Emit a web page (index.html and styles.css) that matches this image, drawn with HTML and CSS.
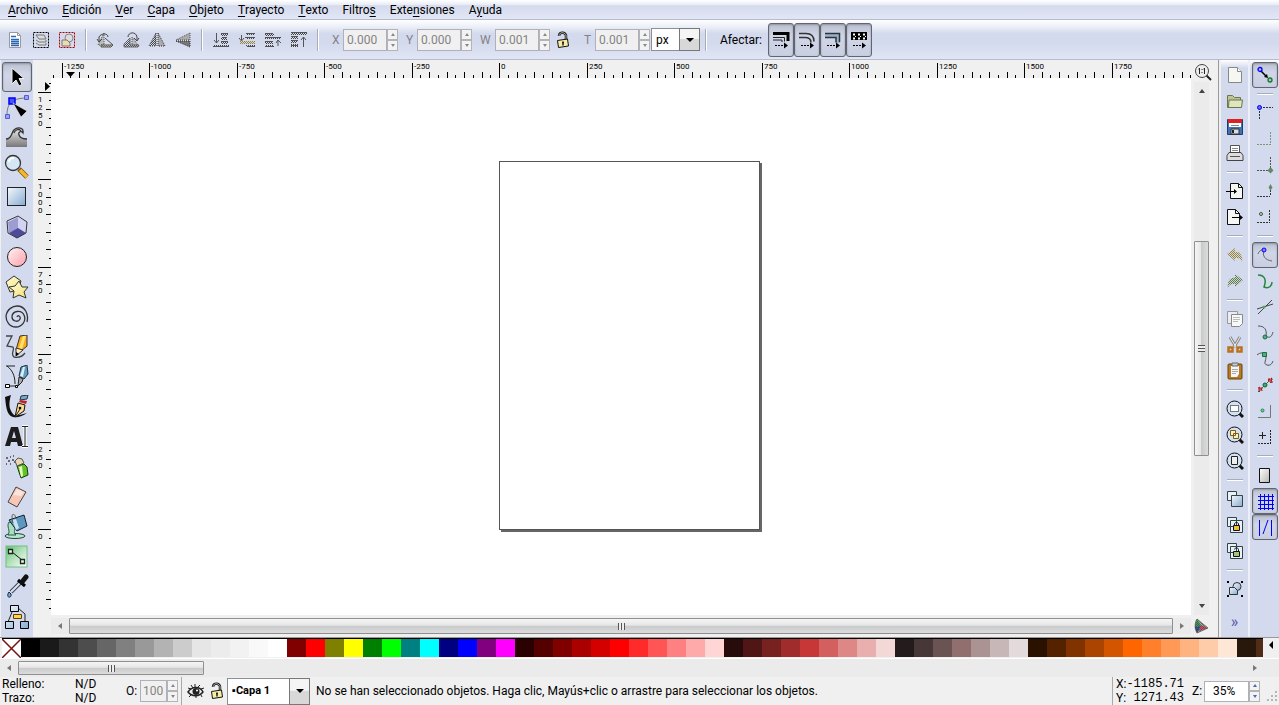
FILE: index.html
```html
<!DOCTYPE html>
<html lang="es">
<head>
<meta charset="utf-8">
<title>Inkscape</title>
<link rel="stylesheet" href="styles.css">
</head>
<body>
<svg class="defs" aria-hidden="true">
  <defs>
    <pattern id="dither" width="2" height="2" patternUnits="userSpaceOnUse"><path d="M0 0h1v1H0zM1 1h1v1H1z" fill="#444"/></pattern>
    <pattern id="ditherTan" width="2" height="2" patternUnits="userSpaceOnUse"><rect width="2" height="2" fill="#ded9c0"/><path d="M0 0h1v1H0zM1 1h1v1H1z" fill="#8c8458"/></pattern>
    <pattern id="ditherGreen" width="2" height="2" patternUnits="userSpaceOnUse"><rect width="2" height="2" fill="#cdd8cc"/><path d="M0 0h1v1H0zM1 1h1v1H1z" fill="#5f7a58"/></pattern>
    <linearGradient id="blue" x2="1" y2="1"><stop stop-color="#f4f9fd"/><stop offset="1" stop-color="#86acd0"/></linearGradient>
    <linearGradient id="pink" x2="1" y2="1"><stop stop-color="#fff4f4"/><stop offset="1" stop-color="#ff9faa"/></linearGradient>
    <linearGradient id="grey" x2="1" y2="1"><stop stop-color="#fff"/><stop offset="1" stop-color="#b5b5b5"/></linearGradient>
    <linearGradient id="gold" x2="1" y2="1"><stop stop-color="#ffffdf"/><stop offset="1" stop-color="#f5de72"/></linearGradient>
    <linearGradient id="green" x2="1" y2="1"><stop stop-color="#5fbf70"/><stop offset=".5" stop-color="#b5e2bd"/><stop offset="1" stop-color="#fff"/></linearGradient>
    <linearGradient id="wave" x2="0" y2="1"><stop stop-color="#eee"/><stop offset="1" stop-color="#777"/></linearGradient>
    <symbol id="lock" viewBox="0 0 14 18"><path d="M3 5c0-5 8-4 7 1v3" fill="none" stroke="#111" stroke-width="2.500"/><path d="M3 5c0-5 8-4 7 1v3" fill="none" stroke="#ddd" stroke-width=".8"/><path d="M1.500 9.500l10-1.500 1 7-10 1.500z" fill="#f7eea5" stroke="#111"/><path d="M7 10.500v4M6 11.500h2" stroke="#222" stroke-width="1.500"/></symbol>
    <symbol id="lens" viewBox="0 0 18 18"><path d="M13 13l4 4" stroke="#111" stroke-width="3"/><circle cx="8.500" cy="8.500" r="7.500" fill="#cfe3f4" stroke="#111"/></symbol>
  </defs>
</svg>

<nav class="menubar" aria-label="Menú">
  <button><u>A</u>rchivo</button><button><u>E</u>dición</button><button><u>V</u>er</button><button><u>C</u>apa</button><button><u>O</u>bjeto</button><button><u>T</u>rayecto</button><button><u>T</u>exto</button><button>Filtro<u>s</u></button><button>Exte<u>n</u>siones</button><button>A<u>y</u>uda</button>
</nav>

<div class="toolbar">
  <button class="tb" aria-label="Seleccionar todo"><svg width="16" height="18"><path d="M2.500 1.500h8l3 3v12h-11z" fill="#fff" stroke="#999"/><path d="M10.500 1.500v3h3" fill="none" stroke="#999"/><path d="M4 5.500h5M4 8.500h8M4 10.500h8M4 12.500h8M4 14.500h8" stroke="#2a66b5" stroke-width="1.300"/></svg></button>
  <button class="tb" aria-label="Seleccionar en todas las capas"><svg width="18" height="18"><rect x="1.500" y="1.500" width="15" height="15" fill="none" stroke="#000" stroke-dasharray="2 1"/><path d="M4 12l3 2h7v-2M4 9l3 2h7V9M4 4h8l2 4H7z" fill="#ddd" stroke="#777"/></svg></button>
  <button class="tb" aria-label="Deseleccionar"><svg width="18" height="18"><rect x="1.500" y="1.500" width="15" height="15" fill="none" stroke="#a00" stroke-dasharray="2 1"/><circle cx="11" cy="7" r="4" fill="#ddd" stroke="#888"/><path d="M4 9h5l3 3v3H4z" fill="#eedcae" stroke="#777"/></svg></button>
  <i class="vsep"></i>
  <button class="tb" aria-label="Rotar a la izquierda"><svg width="18" height="18"><path d="M8 2v12H2z" fill="#bbb" stroke="#555" stroke-dasharray="1 1"/><path d="M9 7l8 7H5v2h10l2-2" fill="url(#ditherTan)" stroke="#555"/><path d="M12 6c0-4-7-4-9 0v4M1 8l2 3 3-3" fill="none" stroke="#444"/></svg></button>
  <button class="tb" aria-label="Rotar a la derecha"><svg width="18" height="18"><path d="M10 6v8h6z" fill="#bbb" stroke="#555" stroke-dasharray="1 1"/><path d="M8 7l-6 6v3h14l1-2H8z" fill="url(#dither)" stroke="#666"/><path d="M6 6c0-5 8-6 9 0v3M12 7l3 3 2-3" fill="none" stroke="#444"/></svg></button>
  <button class="tb" aria-label="Reflejar horizontal"><svg width="18" height="18"><path d="M8 2v13H1z" fill="url(#dither)"/><path d="M10 2v13h7z" fill="#aaa" stroke="#333" stroke-dasharray="1 1"/><path d="M8 2v13H1z" fill="none" stroke="#444" stroke-dasharray="1 1"/></svg></button>
  <button class="tb" aria-label="Reflejar vertical"><svg width="18" height="18"><path d="M16 2v7H2z" fill="#aaa" stroke="#555" stroke-dasharray="1 1"/><path d="M2 10h14v6z" fill="#777" stroke="#333" stroke-dasharray="1 1"/></svg></button>
  <i class="vsep"></i>
  <button class="tb" aria-label="Bajar al fondo"><svg width="18" height="18"><path d="M9 2h7v3H9zM9 6h6v3H9zM9 10h7v3H9zM2 14h15v2H2z" fill="url(#dither)"/><path d="M4.500 2v10M2 9l2.500 3L7 9M9 2.500h7M10 6.500h5M9 10.500h7M1 15.500h16" fill="none" stroke="#555"/></svg></button>
  <button class="tb" aria-label="Bajar"><svg width="18" height="18"><path d="M8 2h9v2H8zM8 6h9v2H8zM8 14h9v2H8z" fill="url(#dither)"/><path d="M2 10h15v3H2z" fill="url(#ditherTan)"/><path d="M3.500 4v5M1 7l2.500 3L6 7M8 2.500h9M7 6.500h10M9 15.500h8" fill="none" stroke="#555"/></svg></button>
  <button class="tb" aria-label="Subir"><svg width="18" height="18"><path d="M1 2h9v3H1zM1 6h16v2H1zM1 10h8v3H1zM1 14h9v2H1z" fill="url(#dither)"/><path d="M1 2.500h8M1 6.500h15M1 10.500h8M1 15.500h8M14 15v-6M12 12l2-3 3 3" fill="none" stroke="#555"/></svg></button>
  <button class="tb" aria-label="Subir al frente"><svg width="18" height="18"><path d="M1 1h16v3H1zM1 5h7v3H1zM1 9h6v3H1zM1 13h7v3H1z" fill="url(#dither)"/><path d="M1 1.500h16M1 5.500h7M2 9.500h6M1 14.500h7M13.500 16V6M11 9l2.500-3L16 9" fill="none" stroke="#555"/></svg></button>
  <i class="vsep"></i>
  <div class="field"><label for="fx">X</label><span class="spin"><input id="fx" value="0.000" disabled><span class="steps"><button aria-label="Más" disabled></button><button aria-label="Menos" disabled></button></span></span></div>
  <div class="field"><label for="fy">Y</label><span class="spin"><input id="fy" value="0.000" disabled><span class="steps"><button aria-label="Más" disabled></button><button aria-label="Menos" disabled></button></span></span></div>
  <div class="field wide"><label for="fw">W</label><span class="spin"><input id="fw" value="0.001" disabled><span class="steps"><button aria-label="Más" disabled></button><button aria-label="Menos" disabled></button></span></span></div>
  <button class="tb" aria-label="Bloquear proporción"><svg width="14" height="18"><use href="#lock"/></svg></button>
  <div class="field"><label for="fh">T</label><span class="spin"><input id="fh" value="0.001" disabled><span class="steps"><button aria-label="Más" disabled></button><button aria-label="Menos" disabled></button></span></span></div>
  <span class="combo units"><select aria-label="Unidad"><option>px</option></select></span>
  <i class="vsep"></i>
  <span class="affect">Afectar:</span>
  <button class="toggle" aria-label="Escalar trazo"><svg width="18" height="18"><path d="M1 2.500h15V10" fill="none" stroke="#000" stroke-width="3"/><path d="M1 6.500h11.500v4M1 9h9v2" fill="none" stroke="#222"/><path d="M3 14.500h9" stroke="#000" stroke-dasharray="2 1"/><path d="M12 11.500l4 3-4 3z"/></svg></button>
  <button class="toggle" aria-label="Escalar esquinas"><svg width="18" height="18"><path d="M1 2.500h7c5 0 8 3 8 8M1 6.500h6c4 0 6 2 6 5" fill="none" stroke="#333" stroke-width="1.500"/><path d="M3 14.500h9" stroke="#000" stroke-dasharray="2 1"/><path d="M12 11.500l4 3-4 3z"/></svg></button>
  <button class="toggle" aria-label="Mover degradados"><svg width="18" height="18"><path d="M1 2h15v10h-4V6H1z" fill="#8fb4d8"/><path d="M1 2.500h14.500V11M1 6.500h11v5" fill="none" stroke="#333" stroke-width="1.500"/><path d="M3 14.500h9" stroke="#000" stroke-dasharray="2 1"/><path d="M12 11.500l4 3-4 3z"/></svg></button>
  <button class="toggle" aria-label="Mover patrones"><svg width="18" height="18"><rect x="1" y="1" width="16" height="8"/><path d="M3 3.500h13M3 7.500h13" stroke="#fff" stroke-width="2" stroke-dasharray="2 3"/><path d="M5 5.500h11" stroke="#fff" stroke-dasharray="1 4"/><path d="M3 14.500h9" stroke="#000" stroke-dasharray="2 1"/><path d="M12 11.500l4 3-4 3z"/></svg></button>
</div>

<main class="work">
  <div class="toolbox">
    <button class="on" aria-label="Seleccionar"><svg width="24" height="24"><path d="M7 3v16l4-4 3 6 3-1.500-3-6h5z" fill="#000" stroke="#eee"/></svg></button>
    <button aria-label="Nodos"><svg width="26" height="26"><path d="M3 22C3 12 5 4 23 4" fill="none" stroke="#777"/><path d="M1.500 20.500h4v4h-4zM20.500 1.500h4v4h-4z" fill="#9aa0f0" stroke="#5558dd"/><path d="M5 4h6v6H5z" fill="#4a55f0" stroke="#00f" stroke-width="1.500"/><path d="M9 9l14 8-6 6z" stroke="#eee" stroke-width=".6"/></svg></button>
    <button aria-label="Retocar"><svg width="24" height="24"><path d="M1 14c6 0 5-6 8-9 4-4 10-2 9 2-3-2-5 0-4 3 1 3 4 4 8 4v8H1z" fill="url(#wave)"/><path d="M1 14c6 0 5-6 8-9 4-4 10-2 9 3-2-3-5-1-4 2 1 3 4 4 8 4M9 8c1-3 5-5 7-2" fill="none" stroke="#333" stroke-width="1.300"/></svg></button>
    <button aria-label="Zoom"><svg width="26" height="26"><path d="M15 15l8 8" stroke="#7b5410" stroke-width="5"/><path d="M16 16l7 7" stroke="#f7b62c" stroke-width="3.500"/><circle cx="9" cy="9" r="7.500" fill="#d5e7f5" stroke="#333" stroke-width="1.300"/><path d="M5 8c0-2 2-4 5-4" fill="none" stroke="#fff" stroke-width="2"/></svg></button>
    <button aria-label="Rectángulo"><svg width="22" height="22"><rect x="1.500" y="1.500" width="18" height="18" fill="url(#blue)" stroke="#222"/></svg></button>
    <button aria-label="Caja 3D"><svg width="24" height="24"><path d="M2 6l11-5 9 6-1 11-9 5-9-5z" fill="#e6e6fa"/><path d="M3 7l10-5v12l-9 4z" fill="#9d9dd4"/><path d="M13 2l8 5v11l-8-4z" fill="#d2d2f2"/><path d="M4 18l9-5 8 5-9 5z" fill="#4c4c9b"/><path d="M2 6l11-5 9 6-1 11-9 5-9-5z" fill="none" stroke="#333"/></svg></button>
    <button aria-label="Elipse"><svg width="22" height="22"><circle cx="11" cy="11" r="9.500" fill="url(#pink)" stroke="#222"/></svg></button>
    <button aria-label="Estrella"><svg width="24" height="24"><path d="M1 7l8-6 7 5-3 9-8 2z" fill="url(#gold)" stroke="#333"/><path d="M14 6l3 6h6l-4 5 2 6-7-3-6 3 1-7-5-4 6-1z" fill="url(#gold)" stroke="#333"/></svg></button>
    <button aria-label="Espiral"><svg width="24" height="24"><path d="M12 12c1-3 4 0 3 2-2 4-8 2-8-2 0-6 9-8 12-2 3 7-3 12-8 12C4 22 1 16 1 11 2 4 8 1 12 1c8 0 12 8 10 16" fill="none" stroke="#333" stroke-width="1.300"/></svg></button>
    <button aria-label="Lápiz"><svg width="24" height="24"><path d="M1 1h6l-5 10 6 1c2 3-3 7 1 10 4 1 8 0 11-4" fill="none" stroke="#444" stroke-width="1.300"/><path d="M15 1l7-1v11l-7 6-4-2z" fill="#ffa91e" stroke="#333"/><path d="M18 1h3l-4 13-3-1z" fill="#ffe46a"/><path d="M11 13l7 2-7 6z" fill="#ffeebf" stroke="#333"/><path d="M11 21v-4l3 2z"/></svg></button>
    <button aria-label="Pluma Bézier"><svg width="26" height="24"><path d="M2 1h9M3 1c5 4 8 9 8 18M5 21h8" fill="none" stroke="#222"/><path d="M1.500 19.500h4v3h-4zM11.500 20.500h2v2h-2z" fill="#fff" stroke="#000"/><path d="M17 2l6-2 1 9-4 5-5-3z" fill="#629bc0" stroke="#234"/><path d="M19 2h2l-2 10-3-1z" fill="#d7f1fb"/><path d="M15 12l4 2-1 3-4 4z" fill="#aaa" stroke="#222"/></svg></button>
    <button aria-label="Caligrafía"><svg width="26" height="24"><path d="M1 2l6-2C5 7 4 14 10 20c5 1 8-1 13-2-6 4-10 5-14 4C2 20 2 10 1 2z" fill="#111"/><path d="M17 1l7-1-1 4-7 1z" fill="#78abc8" stroke="#234"/><path d="M16 5l7 1-1 3-7-2z" fill="#c21f24"/><path d="M14 8l7 2-1 6-9 6z" fill="#f9d98e" stroke="#111"/><path d="M11 22l5-8" stroke="#222"/><circle cx="16" cy="13" r="1.300"/></svg></button>
    <button aria-label="Texto"><svg width="26" height="24"><path d="M1 21L7 2h7l5 19h-5l-1-4H7l-1 4zM8 13h4l-2-7z" fill="#1d1d1d"/><path d="M18 1.500h6M21 1v20M18 21.500h6" stroke="#fff" stroke-width="3"/><path d="M18 1.500h6M21 1v20M18 21.500h6" stroke="#222"/></svg></button>
    <button aria-label="Rociador"><svg width="26" height="24"><path d="M2 3h2M6 2h1M4 6h2M8 5h2M6 9h1M10 7h1M9 1h1M2 9h1" stroke="#444" stroke-width="1.500"/><path d="M13 11l7-2 3 3 1 8-7 3z" fill="#63bf2a" stroke="#183d0b"/><path d="M15 12l3-1 1 10-2 1z" fill="#e7ffb8"/><path d="M11 6l3-3 4 1 2 4-7 3z" fill="#ead9b0" stroke="#555"/></svg></button>
    <button aria-label="Borrador"><svg width="24" height="24"><path d="M11 2l10 5-9 15-9-5z" fill="#f7c6b5" stroke="#444"/><path d="M12 4l7 3-3 4-8-1z" fill="#fbe4db"/></svg></button>
    <button aria-label="Cubo de pintura"><svg width="26" height="26"><ellipse cx="11" cy="22" rx="10" ry="2.500" fill="#b6e8c4" stroke="#244"/><path d="M5 8c-3 5 2 8-1 13h8c-4-3 1-6-2-11z" fill="#a9dfbc" stroke="#355"/><path d="M5 6l15-5 3 11-10 5z" fill="#5e97bd" stroke="#123"/><path d="M8 6l4-1 3 9-3 2z" fill="#c7e2f0"/><path d="M9 9c-3-11 2-11 3-4" fill="none" stroke="#555"/></svg></button>
    <button aria-label="Degradado"><svg width="24" height="24"><rect x="1" y="1" width="21" height="21" fill="url(#green)" stroke="#71bf82"/><path d="M7 7l10 8" stroke="#111"/><path d="M3.500 4.500h4v4h-4zM15.500 14.500h4v4h-4z" fill="#dfd" stroke="#222" stroke-width="1.300"/></svg></button>
    <button aria-label="Cuentagotas"><svg width="26" height="26"><path d="M7 18L17 8" stroke="#445" stroke-width="4"/><path d="M7 18L17 8" stroke="#d5e7f1" stroke-width="2"/><path d="M14 6l7 6" stroke="#000" stroke-width="3"/><path d="M18 8l4-5" stroke="#111" stroke-width="5" stroke-linecap="round"/><path d="M5 18c-4 6 3 7 2 2z" fill="#78aed3" stroke="#124"/></svg></button>
    <button aria-label="Conectores"><svg width="26" height="26"><path d="M8 8L4 18M14 4l7 6v8" fill="none" stroke="#222"/><path d="M6.500 1.500h8v6h-8zM1.500 17.500h8v7h-8zM16.500 17.500h8v7h-8z" fill="url(#blue)" stroke="#000"/><path d="M9.500 10.500h8v4h-8z" fill="#ffd44a" stroke="#654000"/></svg></button>
  </div>

  <div class="editor">
    <svg class="hruler" id="hruler"></svg>
    <button class="corner zoomfit" aria-label="Zoom 1:1"><svg width="18" height="18"><path d="M12 12l5 5" stroke="#222" stroke-width="2"/><circle cx="8" cy="8" r="6.500" fill="#eee" stroke="#444"/><path d="M5.500 5v6M10.500 5v6M8 6v1M8 9v1M4.500 6h1M9.500 6h1" stroke="#222"/></svg></button>
    <svg class="vruler" id="vruler"></svg>
    <div class="canvas"><div class="page"></div></div>
    <div class="vscroll"><button class="up" aria-label="Arriba"></button><i class="gap"></i><i class="thumb"></i><i class="gap"></i><button class="down" aria-label="Abajo"></button></div>
    <div class="hscroll"><button class="left" aria-label="Izquierda"></button><i class="thumb"></i><button class="right" aria-label="Derecha"></button></div>
    <button class="corner cms" aria-label="Gestión de color"><svg width="16" height="16"><path d="M3 1l11 9-11 5C0 10 1 4 3 1z" fill="#9b9"/><path d="M3 1L1 9l6-1z" fill="#3a9c4f"/><path d="M14 10L7 7l-2 6z" fill="#d64d6b"/><path d="M1 9l6-1-4 7z" fill="#37479d"/><path d="M3 1l11 9-11 5C0 10 1 4 3 1z" fill="url(#dither)" opacity=".6" stroke="#333"/></svg></button>
  </div>

  <div class="commands">
    <button aria-label="Nuevo"><svg width="18" height="18"><path d="M2.500 1.500h9l4 4v11h-13z" fill="#f6f6f3" stroke="#888"/><path d="M11.500 1.500v4h4" fill="#fff" stroke="#888"/></svg></button>
    <button aria-label="Abrir"><svg width="18" height="18"><path d="M1.500 15.500v-12h5l2 2h6v10z" fill="#bcc694" stroke="#6b7650"/><path d="M3 8h13.500l-1 7.500h-13z" fill="#dfe5bd" stroke="#6b7650"/></svg></button>
    <button aria-label="Guardar"><svg width="18" height="18"><path d="M1.500 1.500h15v15h-15z" fill="#3f74b4" stroke="#173e70"/><path d="M3 2h12v7H3z" fill="#fff"/><path d="M2 1h14v4H2z" fill="#df2020"/><path d="M5 7.500h8" stroke="#888"/><path d="M5 11h8v5H5z" fill="#ddd" stroke="#333"/><path d="M7 12v3" stroke="#222" stroke-width="2"/></svg></button>
    <button aria-label="Imprimir"><svg width="18" height="18"><path d="M4.500 8.500v-7h9v7" fill="#fff" stroke="#555"/><path d="M6 4.500h6M6 6.500h6" stroke="#888"/><path d="M3 8.500h12l2 3v5H1v-5z" fill="#ddd" stroke="#444"/><path d="M4 12.500h10" stroke="#555"/></svg></button>
    <hr>
    <button aria-label="Importar"><svg width="18" height="18"><path d="M4.500 1.500h8l4 4v11h-12z" fill="#f6f6f3" stroke="#111"/><path d="M12.500 1.500v4h4" fill="none" stroke="#111"/><path d="M0 9.500h8" stroke="#000"/><path d="M8 7l3 2.500L8 12z"/></svg></button>
    <button aria-label="Exportar"><svg width="18" height="18"><path d="M1.500 1.500h8l4 4v11h-12z" fill="#f6f6f3" stroke="#111"/><path d="M9.500 1.500v4h4" fill="none" stroke="#111"/><path d="M6 9.500h8" stroke="#000"/><path d="M14 7l3 2.500-3 2.500z"/></svg></button>
    <hr>
    <button aria-label="Deshacer"><svg width="18" height="18"><path d="M1 8l8-6v4c5-1 8 4 7 10-1-4-4-4-7-4v3z" fill="url(#ditherTan)"/></svg></button>
    <button aria-label="Rehacer"><svg width="18" height="18"><path d="M17 8L9 2v4C4 5 1 10 2 16c1-4 4-4 7-4v3z" fill="url(#ditherGreen)"/></svg></button>
    <hr>
    <button aria-label="Copiar"><svg width="18" height="18"><path d="M1.500 1.500h10v12h-10z" fill="#e9edf3" stroke="#999"/><path d="M5.500 4.500h11v9l-3 3h-8z" fill="#f8f8f8" stroke="#888"/><path d="M7 7.500h7M7 9.500h7M7 11.500h5" stroke="#bbb"/></svg></button>
    <button aria-label="Cortar"><svg width="18" height="18"><path d="M4 1l6 10M14 1L8 11" stroke="#888" stroke-width="3"/><path d="M4 1l6 10M14 1L8 11" stroke="#eee"/><path d="M2.500 11.500h4v4h-4zM11.500 11.500h4v4h-4z" fill="none" stroke="#bb721c" stroke-width="2.500"/></svg></button>
    <button aria-label="Pegar"><svg width="18" height="18"><rect x="2" y="2" width="14" height="15" rx="1" fill="#b87a25" stroke="#6a410b"/><path d="M5 4h8v8l-2 3H5z" fill="#f6f6f6"/><path d="M6 7.500h6M6 9.500h6M6 11.500h4" stroke="#aaa"/><path d="M6 1h6v3H6z" fill="#ccc" stroke="#666"/></svg></button>
    <hr>
    <button aria-label="Zoom selección"><svg width="18" height="18"><use href="#lens"/><rect x="4.500" y="5.500" width="8" height="6" fill="#fff" stroke="#000" stroke-dasharray="1 1"/></svg></button>
    <button aria-label="Zoom dibujo"><svg width="18" height="18"><use href="#lens"/><path d="M4.500 4.500h5v5h-5zM7.500 7.500h5v5h-5z" fill="#fff1b1" stroke="#80591c"/></svg></button>
    <button aria-label="Zoom página"><svg width="18" height="18"><use href="#lens"/><path d="M5.500 4.500h6v8h-6z" fill="#eee" stroke="#222"/></svg></button>
    <hr>
    <button aria-label="Duplicar"><svg width="18" height="18"><path d="M1.500 1.500h9v9h-9z" fill="#e8f0f8" stroke="#344"/><path d="M5.500 5.500h11v11h-11z" fill="url(#blue)" stroke="#344"/></svg></button>
    <button aria-label="Clonar"><svg width="18" height="18"><path d="M1.500 1.500h9v9h-9zM4.500 4.500h12v12h-12z" fill="#e8f0f8" stroke="#344"/><path d="M8.500 10V8c0-2 4-2 4 0v2" fill="none" stroke="#111"/><path d="M7.500 9.500h6v5h-6z" fill="#f2bd3b" stroke="#111"/></svg></button>
    <button aria-label="Desvincular clon"><svg width="18" height="18"><path d="M1.500 1.500h9v9h-9zM4.500 4.500h12v12h-12z" fill="#e8f0f8" stroke="#344"/><path d="M8.500 7.500c0-2 4-2 4 0v2" fill="none" stroke="#111"/><path d="M7.500 9.500h6v5h-6z" fill="#9cc77c" stroke="#111"/></svg></button>
    <hr>
    <button aria-label="Agrupar"><svg width="18" height="18"><path d="M1 1h2v2H1zM15 1h2v2h-2zM1 15h2v2H1zM15 15h2v2h-2z"/><circle cx="11" cy="6.500" r="4" fill="url(#blue)" stroke="#333"/><path d="M3.500 7.500h5l3 3v4h-8z" fill="url(#blue)" stroke="#333"/></svg></button>
    <button class="more" aria-label="Más órdenes">»</button>
  </div>

  <div class="snap">
    <button class="on" aria-label="Ajustar"><svg width="18" height="18"><path d="M5 5l5 5" stroke="#000" stroke-width="1.500"/><path d="M12 12l-4-1 3-3z"/><circle cx="4" cy="3.500" r="2" fill="#b5bfff" stroke="#00f" stroke-width="1.300"/><circle cx="14" cy="14" r="2" fill="#9dcfa8" stroke="#173" stroke-width="1.300"/></svg></button>
    <hr>
    <button aria-label="Cajas"><svg width="18" height="18"><path d="M3.500 4v12M4 3.500h13" stroke="#333" stroke-dasharray="2 1"/><circle cx="3.500" cy="3.500" r="2" fill="#66f" stroke="#00f"/></svg></button>
    <button aria-label="Bordes"><svg width="18" height="18"><path d="M14.500 2v13M1 14.500h13" stroke="#797" stroke-dasharray="2 1"/></svg></button>
    <button aria-label="Esquinas"><svg width="18" height="18"><path d="M14.500 1v13M1 14.500h13" stroke="#555" stroke-dasharray="2 1"/><path d="M14.500 11l3 3.500-3 3-3-3z" fill="#686"/></svg></button>
    <button aria-label="Puntos medios"><svg width="18" height="18"><path d="M14.500 5v9M1 14.500h13" stroke="#333" stroke-dasharray="2 1"/><path d="M14.500 2l2 3.500-2 3-2-3z" fill="#686"/></svg></button>
    <button aria-label="Centros"><svg width="18" height="18"><path d="M13.500 2v12M1 14.500h13" stroke="#333" stroke-dasharray="2 1"/><circle cx="5" cy="6" r="1.500" fill="none" stroke="#353"/></svg></button>
    <hr>
    <button class="on" aria-label="Nodos"><svg width="18" height="18"><path d="M2 8c1-4 6-5 6-4-2 6 1 10 8 11" fill="none" stroke="#666"/><circle cx="8" cy="4" r="2" fill="#88f" stroke="#00f"/></svg></button>
    <button aria-label="Trayectos"><svg width="18" height="18"><path d="M2 3c6 0 9 4 6 12 5 2 8-1 8-5" fill="none" stroke="#26863d" stroke-width="1.500"/></svg></button>
    <button aria-label="Intersecciones"><svg width="18" height="18"><path d="M2 16L16 2M1 11l16-5" stroke="#444"/><circle cx="8" cy="9" r="1.500" fill="#5a5"/></svg></button>
    <button aria-label="Nodos vértice"><svg width="18" height="18"><path d="M2 2c7 0 9 4 8 10 4 3 6 0 7-4" fill="none" stroke="#555"/><circle cx="9" cy="13" r="2" fill="#58a6a0" stroke="#173"/></svg></button>
    <button aria-label="Nodos suaves"><svg width="18" height="18"><path d="M1 5c3-3 9-3 9 2 0 4-3 7 1 8 3 1 5-1 6-4" fill="none" stroke="#555"/><path d="M6.500 2.500h4v4h-4z" fill="#58a68b" stroke="#173"/></svg></button>
    <button aria-label="Puntos de línea"><svg width="18" height="18"><path d="M2 16L16 2" stroke="#464"/><path d="M3 11l3 2-3 3zM12 4l4-2-1 5zM2 12h4v3M12 3h4v4" fill="#d55" stroke="#922" stroke-dasharray="2 1"/><circle cx="9" cy="9" r="2" fill="#4a6" stroke="#164"/></svg></button>
    <button aria-label="Centros de objeto"><svg width="18" height="18"><path d="M14.500 3v12.500H2" fill="none" stroke="#777"/><circle cx="6.500" cy="8.500" r="1.500" fill="#8c8" stroke="#185"/></svg></button>
    <button aria-label="Centro de rotación"><svg width="18" height="18"><path d="M14.500 2v13M2 15.500h13" stroke="#222" stroke-dasharray="2 1"/><path d="M6.500 4v7M3 7.500h7" stroke="#222"/></svg></button>
    <hr>
    <button aria-label="Borde de página"><svg width="18" height="18"><path d="M3.500 2.500h10v14h-10z" fill="url(#grey)" stroke="#111"/></svg></button>
    <button class="on" aria-label="Rejilla"><svg width="18" height="18"><path d="M4.500 2v16M8.500 2v16M12.500 2v16M16.500 2v16M2 4.500h16M2 8.500h16M2 12.500h16M2 16.500h16" stroke="#00f"/></svg></button>
    <button class="on" aria-label="Guías"><svg width="18" height="18"><path d="M3.500 2v16M15.500 2v16M7 16l5-14" stroke="#00f"/></svg></button>
  </div>
</main>

<div class="palette">
  <button class="none" aria-label="Ninguno"><svg viewBox="0 0 19 19"><path d="M0 0l19 19M19 0L0 19" stroke="#7a1015" stroke-width="1.500"/></svg></button>
  <div class="swatches" id="swatches"></div>
  <button class="fly" aria-label="Paletas"></button>
</div>
<div class="pscroll"><button class="left" aria-label="Izquierda"></button><i class="thumb"></i><i class="gap"></i><button class="right" aria-label="Derecha"></button></div>

<footer class="status">
  <dl class="style"><dt>Relleno:</dt><dd>N/D</dd><dt>Trazo:</dt><dd>N/D</dd></dl>
  <label class="olabel" for="op">O:</label>
  <span class="spin small"><input id="op" value="100" disabled><span class="steps"><button aria-label="Más" disabled></button><button aria-label="Menos" disabled></button></span></span>
  <i class="ssep"></i>
  <button class="sb" aria-label="Visibilidad"><svg width="18" height="18"><path d="M1 10c4-6 12-6 15 0-4 5-11 5-15 0z" fill="#eee" stroke="#222" stroke-width="1.500"/><circle cx="9" cy="9.500" r="3.500" fill="#222"/><circle cx="10" cy="8.500" r="1" fill="#fff"/><path d="M1 6l3 1M4 3l2 3M8 2v3M13 3l-2 2M17 6l-3 1M4 13l-2 2M9 14v2M14 13l1 2" stroke="#222"/></svg></button>
  <button class="sb" aria-label="Bloquear capa"><svg width="14" height="18"><use href="#lock"/></svg></button>
  <span class="combo layer"><select aria-label="Capa"><option>▪Capa 1</option></select></span>
  <p class="msg">No se han seleccionado objetos. Haga clic, Mayús+clic o arrastre para seleccionar los objetos.</p>
  <i class="ssep"></i>
  <dl class="coords"><dt>X:</dt><dd>-1185.71</dd><dt>Y:</dt><dd>1271.43</dd></dl>
  <label class="zlabel" for="zm">Z:</label>
  <span class="spin zoom"><input id="zm" value="35%"><span class="steps"><button aria-label="Más"></button><button aria-label="Menos"></button></span></span>
  <svg class="grip" width="12" height="12"><path d="M9 1h2M5 5h2M9 5h2M1 9h2M5 9h2M9 9h2" stroke="#b5b5b5" stroke-width="2"/></svg>
</footer>
<script src="app.js"></script>
</body>
</html>
```
FILE: styles.css
```css
* { box-sizing: border-box; }
html, body { height: 100%; }
body {
  margin: 0;
  display: flex;
  flex-direction: column;
  overflow: hidden;
  background: #f0f0f0;
  color: #000;
  font: 12px/14px Roboto, "Open Sans", sans-serif;
}
button { margin: 0; padding: 0; border: 0; background: none; font: inherit; color: inherit; display: flex; align-items: center; justify-content: center; flex: none; }
input, select { font: inherit; margin: 0; border-radius: 0; min-width: 0; }
svg { display: block; flex: none; }
.defs { position: absolute; width: 0; height: 0; }

.menubar {
  display: flex;
  flex: none;
  height: 20px;
  padding-left: 1px;
  background: linear-gradient(#fff, #e8ecf6 25%, #d5dbed 30%, #e1e6f6 95%);
  border-bottom: 1px solid #b6bccc;
}
.menubar button { padding: 0 7px; }
u { text-underline-offset: 2px; }

.toolbar {
  display: flex;
  flex: none;
  align-items: center;
  height: 40px;
  padding-left: 2px;
  background: linear-gradient(#fff, #e8ecf6 20%, #d3daed 35%, #d3daed 60%, #e1e6f6);
  border-bottom: 1px solid #b6bccc;
}
.tb { width: 26px; height: 26px; }
.vsep { flex: none; width: 2px; height: 22px; margin: 0 5px; background: linear-gradient(90deg, #a9adb8 50%, #fff 50%); }
.field { display: flex; align-items: center; gap: 4px; margin-left: 8px; color: #838383; }
.field label { width: 7px; }
.field.wide label { width: 11px; }
.spin { display: flex; flex: none; width: 55px; height: 22px; }
.spin input { flex: 1; width: 0; padding: 0 3px; border: 1px solid #aeb1b9; background: #f0f0f0; color: #838383; }
.steps { display: flex; flex-direction: column; width: 11px; }
.steps button { flex: 1; width: 11px; border: 1px solid #b4b4b4; background: #f3f3f3; }
.steps button::before { content: ""; border: 2px solid transparent; border-top: 0; border-bottom: 3px solid #888; }
.steps button + button::before { border-bottom: 0; border-top: 3px solid #888; }
.combo { position: relative; display: flex; flex: none; height: 23px; }
.combo select { flex: 1; appearance: none; border: 1px solid #8c8f96; background: #fff; color: #000; padding: 0 4px; }
.combo::before { content: ""; position: absolute; right: 0; top: 0; bottom: 0; width: 19px; border: 1px solid #777; background: linear-gradient(#f5f5f5 45%, #d8d8d8 50%); pointer-events: none; }
.combo::after { content: ""; position: absolute; right: 6px; top: 50%; margin-top: -2px; border: 4px solid transparent; border-bottom: 0; border-top-color: #000; pointer-events: none; }
.units { width: 49px; margin-left: 1px; }
.affect { width: 56px; padding-left: 8px; }
.toggle, .on { border: 1px solid #62656e; border-radius: 3px; background: linear-gradient(#bcc1d1, #d0d6e7 40%, #c9cfe0); box-shadow: inset 0 1px 2px #8d93a3; }
.toggle { width: 26px; height: 34px; }

.work { flex: 1; display: flex; min-height: 0; }
.toolbox { display: flex; flex-direction: column; width: 34px; padding: 2px 1px 0; background: #d3daed; border-left: 1px solid #f0f0f0; border-right: 1px solid #eef0f6; }
.toolbox button { height: 30px; width: 30px; }

.editor {
  flex: 1;
  min-width: 0;
  display: grid;
  grid-template-columns: 17px 1fr 27px;
  grid-template-rows: 18px 1fr 22px;
}
.hruler { grid-area: 1 / 2; width: 100%; height: 18px; }
.vruler { grid-area: 2 / 1; width: 100%; height: 100%; }
.hruler, .vruler { overflow: hidden; fill: #000; font-size: 8px; }
.canvas { grid-area: 2 / 2; position: relative; background: #fff; overflow: hidden; }
.page { position: absolute; left: 448px; top: 83px; width: 261px; height: 369px; border: 1px solid #555; box-shadow: 2px 2px 0 #666; }
.corner { justify-self: start; margin-left: 3px; }
.zoomfit { grid-area: 1 / 3; align-self: start; margin-top: 3px; }
.cms { grid-area: 3 / 3; align-self: center; }
.vscroll, .hscroll, .pscroll { display: flex; background: #ebebeb; }
.vscroll { grid-area: 2 / 3; flex-direction: column; width: 15px; margin: 4px 0 0 3px; }
.hscroll { grid-area: 3 / 2; height: 16px; margin: 3px 0 0; }
.vscroll button { height: 18px; }
.hscroll button, .pscroll button { width: 18px; }
.gap { flex: 1; }
.thumb { border: 1px solid #8f8f8f; border-radius: 1px; display: flex; align-items: center; justify-content: center; }
.thumb::before { content: ""; width: 7px; height: 7px; background: repeating-linear-gradient(90deg, #555 0 1px, #eee 1px 3px); }
.vscroll .thumb { flex: 1.52; background: linear-gradient(90deg, #f5f5f5, #e6e6e6 45%, #c9cacc 50%, #dcdcdc); }
.vscroll .thumb::before { background: repeating-linear-gradient(#555 0 1px, #eee 1px 3px); }
.hscroll .thumb { flex: 1; }
.hscroll .thumb, .pscroll .thumb { background: linear-gradient(#f5f5f5, #e6e6e6 45%, #c9cacc 50%, #dcdcdc); }
.up::before, .down::before, .left::before, .right::before, .fly::before { content: ""; border: 3px solid transparent; }
.up::before { border-top: 0; border-bottom: 4px solid #444; }
.down::before { border-bottom: 0; border-top: 4px solid #444; }
.left::before { border-left: 0; border-right: 4px solid #777; }
.right::before { border-right: 0; border-left: 4px solid #777; }

.commands, .snap { display: flex; flex-direction: column; align-items: center; padding-top: 2px; background: linear-gradient(#fff, #d3daed 8px); }
.commands { width: 32px; border-left: 1px solid #9a9a9a; border-right: 2px solid #eceff8; box-shadow: inset 2px 0 #f0f0f0; padding-left: 2px; }
.snap { width: 29px; }
.commands button, .snap button { width: 26px; height: 26px; }
.commands hr, .snap hr { flex: none; width: 16px; height: 2px; margin: 5px 0; border: 0; background: linear-gradient(#a9adb8 50%, #fff 50%); }
.commands .more { height: 40px; color: #55a; font-size: 16px; }

.palette { display: flex; flex: none; height: 22px; border-top: 1px solid #999; border-bottom: 1px solid #fff; padding: 0 0 1px 2px; }
.none { width: 19px; height: 20px; background: #fff; border-top: 1px solid #000; }
.none svg { width: 19px; height: 19px; }
.swatches { flex: 1; display: flex; overflow: hidden; border-top: 1px solid #000; }
.swatches button { width: 19px; height: 19px; }
.fly { width: 16px; height: 14px; }
.fly::before { border-width: 4px; border-left: 0; border-right-color: #000; }
.pscroll { flex: none; height: 18px; padding: 2px 15px 2px 0; }
.pscroll .thumb { width: 186px; height: 14px; }

.status { display: flex; flex: none; align-items: center; height: 28px; }
.status dl { display: grid; margin: 0; line-height: 14px; }
.status dd { margin: 0; }
.style { grid-template-columns: 73px 51px; padding-left: 2px; }
.olabel { width: 14px; }
.spin.small { width: 38px; }
.small input { padding: 0 2px; }
.ssep { width: 1px; height: 28px; margin: 0 3px; background: #a9a9a9; }
.sb { width: 20px; height: 24px; margin-left: 1px; }
.layer { width: 83px; height: 27px; }
.layer select { font-weight: 700; font-size: 11px; }
.msg { flex: 1; margin: 0 0 0 6px; white-space: nowrap; }
.coords { grid-template-columns: 10px 58px; }
.coords dd { text-align: right; font-family: "Liberation Mono", monospace; }
.zlabel { width: 12px; margin-left: 8px; }
.spin.zoom { width: 56px; height: 21px; }
.spin.zoom input { background: #fff; color: #000; padding-left: 8px; }
.zoom .steps button::before { border-bottom-color: #4468b8; }
.zoom .steps button + button::before { border-top-color: #4468b8; }
.grip { align-self: flex-end; margin: 0 1px 2px 6px; }
```
FILE: app.js
```js
const NS = "http://www.w3.org/2000/svg";
const STEP = 8.75; // pixels per 25 document units at 35% zoom

function add(parent, name, attrs, text) {
  const el = document.createElementNS(NS, name);
  for (const key in attrs) el.setAttribute(key, attrs[key]);
  if (text) el.textContent = text;
  parent.appendChild(el);
}

function drawHorizontal(svg, origin) {
  const width = svg.getBoundingClientRect().width;
  for (let i = -Math.floor(origin / STEP); origin + i * STEP < width; i++) {
    const x = Math.floor(origin + i * STEP);
    const size = i % 10 === 0 ? 15 : i % 2 === 0 ? 6 : 3;
    add(svg, "rect", { x, y: 18 - size, width: 1, height: size });
    if (i % 10 === 0) add(svg, "text", { x: x + 2, y: 9 }, String(i * 25));
  }
  add(svg, "path", { d: "M15 12h9l-4.500 5z" });
}

function drawVertical(svg, origin) {
  const height = svg.getBoundingClientRect().height;
  for (let i = Math.floor(origin / STEP); origin - i * STEP < height; i--) {
    const y = Math.floor(origin - i * STEP);
    const size = i % 10 === 0 ? 13 : i % 2 === 0 ? 5 : 2;
    add(svg, "rect", { x: 17 - size, y, width: size, height: 1 });
    if (i % 10 === 0) {
      [...String(Math.abs(i * 25))].forEach((digit, n) => {
        add(svg, "text", { x: 4, y: y + 10 + n * 8 }, digit);
      });
    }
  }
  add(svg, "path", { d: "M11 4v9l5-4.500z" });
}

const COLORS = ("000000 1a1a1a 333333 4d4d4d 666666 808080 999999 b3b3b3 cccccc e6e6e6 ececec f2f2f2 f9f9f9 ffffff " +
  "800000 ff0000 808000 ffff00 008000 00ff00 008080 00ffff 000080 0000ff 800080 ff00ff " +
  "2b0000 550000 800000 aa0000 d40000 ff0000 ff2a2a ff5555 ff8080 ffaaaa ffd5d5 " +
  "280b0b 501616 782121 a02c2c c83737 d35f5f de8787 e9afaf f4d7d7 " +
  "241c1c 483737 6c5353 916f6f ac9393 c8b7b7 e3dbdb " +
  "2b1100 552200 803300 aa4400 d45500 ff6600 ff7f2a ff9955 ffb380 ffccaa ffe6d5 28170b 502d16").split(" ");

const swatches = document.getElementById("swatches");
for (const color of COLORS) {
  const button = document.createElement("button");
  button.style.background = "#" + color;
  button.setAttribute("aria-label", "#" + color);
  swatches.appendChild(button);
}
drawHorizontal(document.getElementById("hruler"), 448.5);
drawVertical(document.getElementById("vruler"), 451.5);
```
